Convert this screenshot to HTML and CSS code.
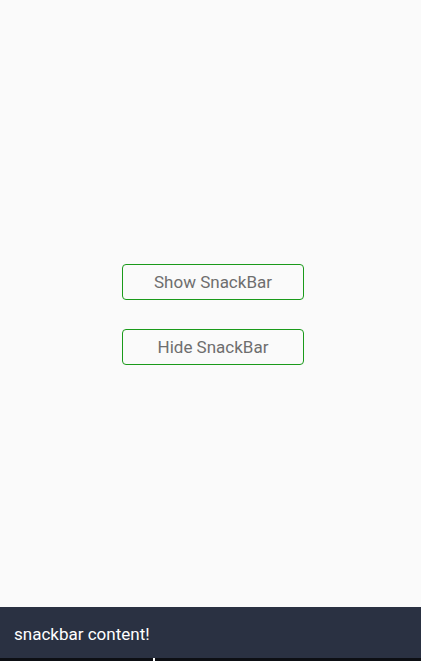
FILE: index.html
```html
<!DOCTYPE html>
<html>
<head>
<meta charset="utf-8">
<link rel="stylesheet" href="styles.css">
</head>
<body>
<div class="page">
  <main class="center">
    <button class="btn">Show SnackBar</button>
    <button class="btn">Hide SnackBar</button>
  </main>
  <div class="snackbar">snackbar content!</div>
  <div class="bottom-line"></div>
  <div class="cursor"></div>
</div>
</body>
</html>
```
FILE: styles.css
```css
html, body {
  margin: 0;
  padding: 0;
  background: #fafafa;
  font-family: Roboto, "Liberation Sans", sans-serif;
}
.page {
  position: relative;
  width: 421px;
  height: 661px;
  display: flex;
  flex-direction: column;
  overflow: hidden;
}
.center {
  height: 607px;
  display: flex;
  flex-direction: column;
  align-items: center;
  padding-top: 264px;
  box-sizing: border-box;
  gap: 29px;
  padding-left: 5px;
}
.btn {
  width: 182px;
  height: 36px;
  border: 1px solid #1a9a1a;
  border-radius: 4px;
  background: #fafafa;
  color: #6e6e6e;
  font-family: Roboto, "Liberation Sans", sans-serif;
  font-size: 17px;
  padding: 0;
  margin: 0;
}
.snackbar {
  height: 51px;
  background: #2a3142;
  color: #ffffff;
  font-size: 17px;
  display: flex;
  align-items: center;
  padding-left: 14px;
  padding-top: 2px;
  box-sizing: border-box;
}
.bottom-line {
  height: 3px;
  background: #0d0f14;
}
.cursor {
  position: absolute;
  left: 153px;
  top: 658px;
  width: 2px;
  height: 3px;
  background: #ffffff;
}
```
